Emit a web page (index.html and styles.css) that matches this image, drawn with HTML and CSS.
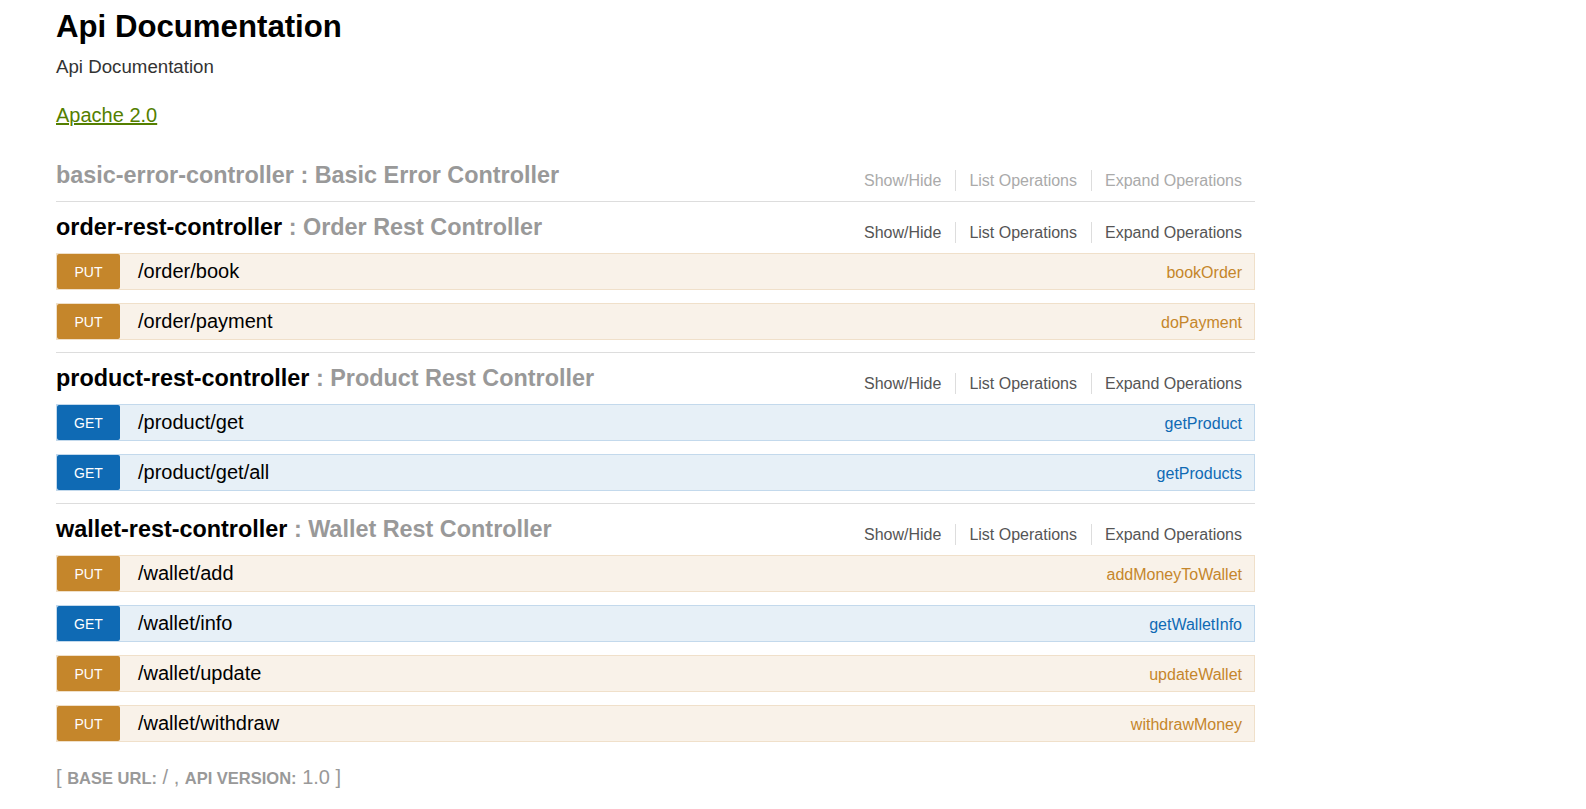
FILE: index.html
```html
<!DOCTYPE html>
<html>
<head>
<meta charset="utf-8">
<title>Swagger UI</title>
<link rel="stylesheet" href="styles.css">
</head>
<body>
<div class="wrap">
  <div class="info">
    <div class="info-title">Api Documentation</div>
    <div class="info-desc">Api Documentation</div>
    <div class="info-license"><a href="#">Apache 2.0</a></div>
  </div>

  <ul class="resources">
    <li class="resource">
      <div class="res-heading">
        <h2 class="res-name"><span class="name">basic-error-controller</span> <span class="desc">: Basic Error Controller</span></h2>
        <ul class="options">
          <li><a href="#">Show/Hide</a></li>
          <li><a href="#">List Operations</a></li>
          <li class="last"><a href="#">Expand Operations</a></li>
        </ul>
      </div>
    </li>

    <li class="resource active">
      <div class="res-heading">
        <h2 class="res-name"><span class="name">order-rest-controller</span> <span class="desc">: Order Rest Controller</span></h2>
        <ul class="options">
          <li><a href="#">Show/Hide</a></li>
          <li><a href="#">List Operations</a></li>
          <li class="last"><a href="#">Expand Operations</a></li>
        </ul>
      </div>
      <ul class="endpoints">
        <li class="op put"><span class="method">PUT</span><span class="path">/order/book</span><span class="nick">bookOrder</span></li>
        <li class="op put"><span class="method">PUT</span><span class="path">/order/payment</span><span class="nick">doPayment</span></li>
      </ul>
    </li>

    <li class="resource active">
      <div class="res-heading">
        <h2 class="res-name"><span class="name">product-rest-controller</span> <span class="desc">: Product Rest Controller</span></h2>
        <ul class="options">
          <li><a href="#">Show/Hide</a></li>
          <li><a href="#">List Operations</a></li>
          <li class="last"><a href="#">Expand Operations</a></li>
        </ul>
      </div>
      <ul class="endpoints">
        <li class="op get"><span class="method">GET</span><span class="path">/product/get</span><span class="nick">getProduct</span></li>
        <li class="op get"><span class="method">GET</span><span class="path">/product/get/all</span><span class="nick">getProducts</span></li>
      </ul>
    </li>

    <li class="resource active last-res">
      <div class="res-heading">
        <h2 class="res-name"><span class="name">wallet-rest-controller</span> <span class="desc">: Wallet Rest Controller</span></h2>
        <ul class="options">
          <li><a href="#">Show/Hide</a></li>
          <li><a href="#">List Operations</a></li>
          <li class="last"><a href="#">Expand Operations</a></li>
        </ul>
      </div>
      <ul class="endpoints">
        <li class="op put"><span class="method">PUT</span><span class="path">/wallet/add</span><span class="nick">addMoneyToWallet</span></li>
        <li class="op get"><span class="method">GET</span><span class="path">/wallet/info</span><span class="nick">getWalletInfo</span></li>
        <li class="op put"><span class="method">PUT</span><span class="path">/wallet/update</span><span class="nick">updateWallet</span></li>
        <li class="op put"><span class="method">PUT</span><span class="path">/wallet/withdraw</span><span class="nick">withdrawMoney</span></li>
      </ul>
    </li>
  </ul>

  <div class="footer">
    <h4>[ <span class="sc">base url:</span> / , <span class="sc">api version:</span> 1.0 ]</h4>
  </div>
</div>
</body>
</html>
```

FILE: styles.css
```css
html, body {
  margin: 0;
  padding: 0;
  background: #fff;
}

body {
  font-family: "Liberation Sans", Arial, sans-serif;
  color: #333;
}

.wrap {
  width: 1199px;
  margin-left: 56px;
  padding-top: 8px;
}

.info-title {
  font-size: 31.2px;
  font-weight: bold;
  line-height: 38px;
  color: #000;
}

.info-desc {
  margin-top: 9px;
  font-size: 18.7px;
  line-height: 24px;
  color: #333;
}

.info-license {
  margin-top: 24px;
  font-size: 20px;
  line-height: 24px;
}

.info-license a {
  color: #547f00;
  text-decoration: underline;
}

.resources {
  list-style: none;
  margin: 23px 0 0 0;
  padding: 0;
}

.resource {
  border-bottom: 1px solid #ddd;
}

.resource.last-res {
  border-bottom: none;
}

.res-heading {
  display: flex;
  align-items: center;
  justify-content: space-between;
  height: 51px;
}

.res-name {
  margin: 0;
  font-size: 23.4px;
  font-weight: bold;
  color: #999;
  white-space: nowrap;
}

.resource.active .res-name .name {
  color: #000;
}

.options {
  list-style: none;
  margin: 9px 0 0 0;
  padding: 0;
  display: flex;
}

.options li {
  font-size: 16px;
  line-height: 21px;
  padding: 0 14px 0 13px;
  border-right: 1px solid #ddd;
}

.options li.last {
  border-right: none;
  padding-right: 13px;
}

.options a {
  color: #aaa;
  text-decoration: none;
}

.resource.active .options a {
  color: #555;
}

.endpoints {
  list-style: none;
  margin: 0;
  padding: 0 0 12px 0;
}

.op {
  display: flex;
  align-items: center;
  height: 35px;
  margin-bottom: 13px;
  border: 1px solid;
}

.op:last-child {
  margin-bottom: 0;
}

.op.put {
  background: #f9f2e9;
  border-color: #f0e0ca;
}

.op.get {
  background: #e7f0f7;
  border-color: #c3d9ec;
}

.method {
  width: 63px;
  height: 35px;
  line-height: 36px;
  text-align: center;
  color: #fff;
  font-size: 14px;
  border-radius: 2px;
  flex: none;
}

.op.put .method {
  background: #c5862b;
}

.op.get .method {
  background: #0f6ab4;
}

.path {
  padding-left: 18px;
  font-size: 20px;
  color: #000;
  flex: 1;
}

.nick {
  padding-right: 12px;
  font-size: 16px;
  padding-top: 2px;
}

.op.put .nick {
  color: #c5862b;
}

.op.get .nick {
  color: #0f6ab4;
}

.footer h4 {
  margin: 11px 0 0 0;
  font-size: 20px;
  line-height: 24px;
  font-weight: normal;
  color: #999;
}

.footer .sc {
  text-transform: uppercase;
  font-size: 16.5px;
  font-weight: bold;
}
```
